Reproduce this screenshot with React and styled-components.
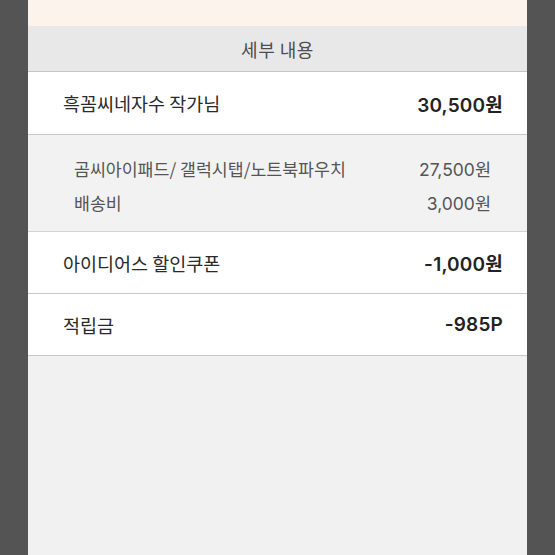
import styled, { createGlobalStyle } from 'styled-components';

const GlobalStyle = createGlobalStyle`
  body {
    margin: 0;
    background: #545454;
    font-family: 'Noto Sans CJK KR', 'Noto Sans', sans-serif;
  }
`;

const Page = styled.div`
  display: flex;
  justify-content: center;
  padding: 0 28px;
  min-height: 555px;
`;

const Panel = styled.div`
  flex: 1;
  display: flex;
  flex-direction: column;
  background: #f1f1f1;
`;

const TopStrip = styled.div`
  height: 26px;
  background: #fdf3ed;
`;

const Header = styled.div`
  height: 45px;
  display: flex;
  align-items: center;
  justify-content: center;
  background: #e8e8e8;
  border-bottom: 1px solid #c4c4c4;
  color: #4d4d4d;
  font-size: 18px;
  letter-spacing: 0.5px;
`;

const Row = styled.div`
  height: ${(p) => p.$h}px;
  display: flex;
  align-items: center;
  justify-content: space-between;
  padding: 0 24px 0 35px;
  background: #fff;
  border-bottom: 1px solid #c8c8c8;
  font-size: 18.5px;
  color: #2a2a2a;
`;

const Amount = styled.span`
  font-family: 'Inter', 'Noto Sans CJK KR', sans-serif;
  font-weight: 600;
  font-size: 19px;
  color: #222;
  letter-spacing: 0.2px;
`;

const Details = styled.div`
  background: #f2f2f2;
  padding: 16px 36px 12px 46px;
  border-bottom: 1px solid #d4d4d4;
`;

const DetailLine = styled.div`
  height: 34px;
  display: flex;
  align-items: center;
  justify-content: space-between;
  font-size: 17.3px;
  color: #555;
`;

const DetailPrice = styled.span`
  font-family: 'Inter', 'Noto Sans CJK KR', sans-serif;
  font-size: 17.5px;
  color: #555;
`;

const Rest = styled.div`
  flex: 1;
  background: #f1f1f1;
`;

export default function App() {
  return (
    <>
      <GlobalStyle />
      <Page>
        <Panel>
          <TopStrip />
          <Header>세부 내용</Header>
          <Row $h={62}>
            <span>흑꼼씨네자수 작가님</span>
            <Amount>30,500원</Amount>
          </Row>
          <Details>
            <DetailLine>
              <span>곰씨아이패드/ 갤럭시탭/노트북파우치</span>
              <DetailPrice>27,500원</DetailPrice>
            </DetailLine>
            <DetailLine>
              <span>배송비</span>
              <DetailPrice>3,000원</DetailPrice>
            </DetailLine>
          </Details>
          <Row $h={61}>
            <span>아이디어스 할인쿠폰</span>
            <Amount>-1,000원</Amount>
          </Row>
          <Row $h={61}>
            <span>적립금</span>
            <Amount>-985P</Amount>
          </Row>
          <Rest />
        </Panel>
      </Page>
    </>
  );
}
